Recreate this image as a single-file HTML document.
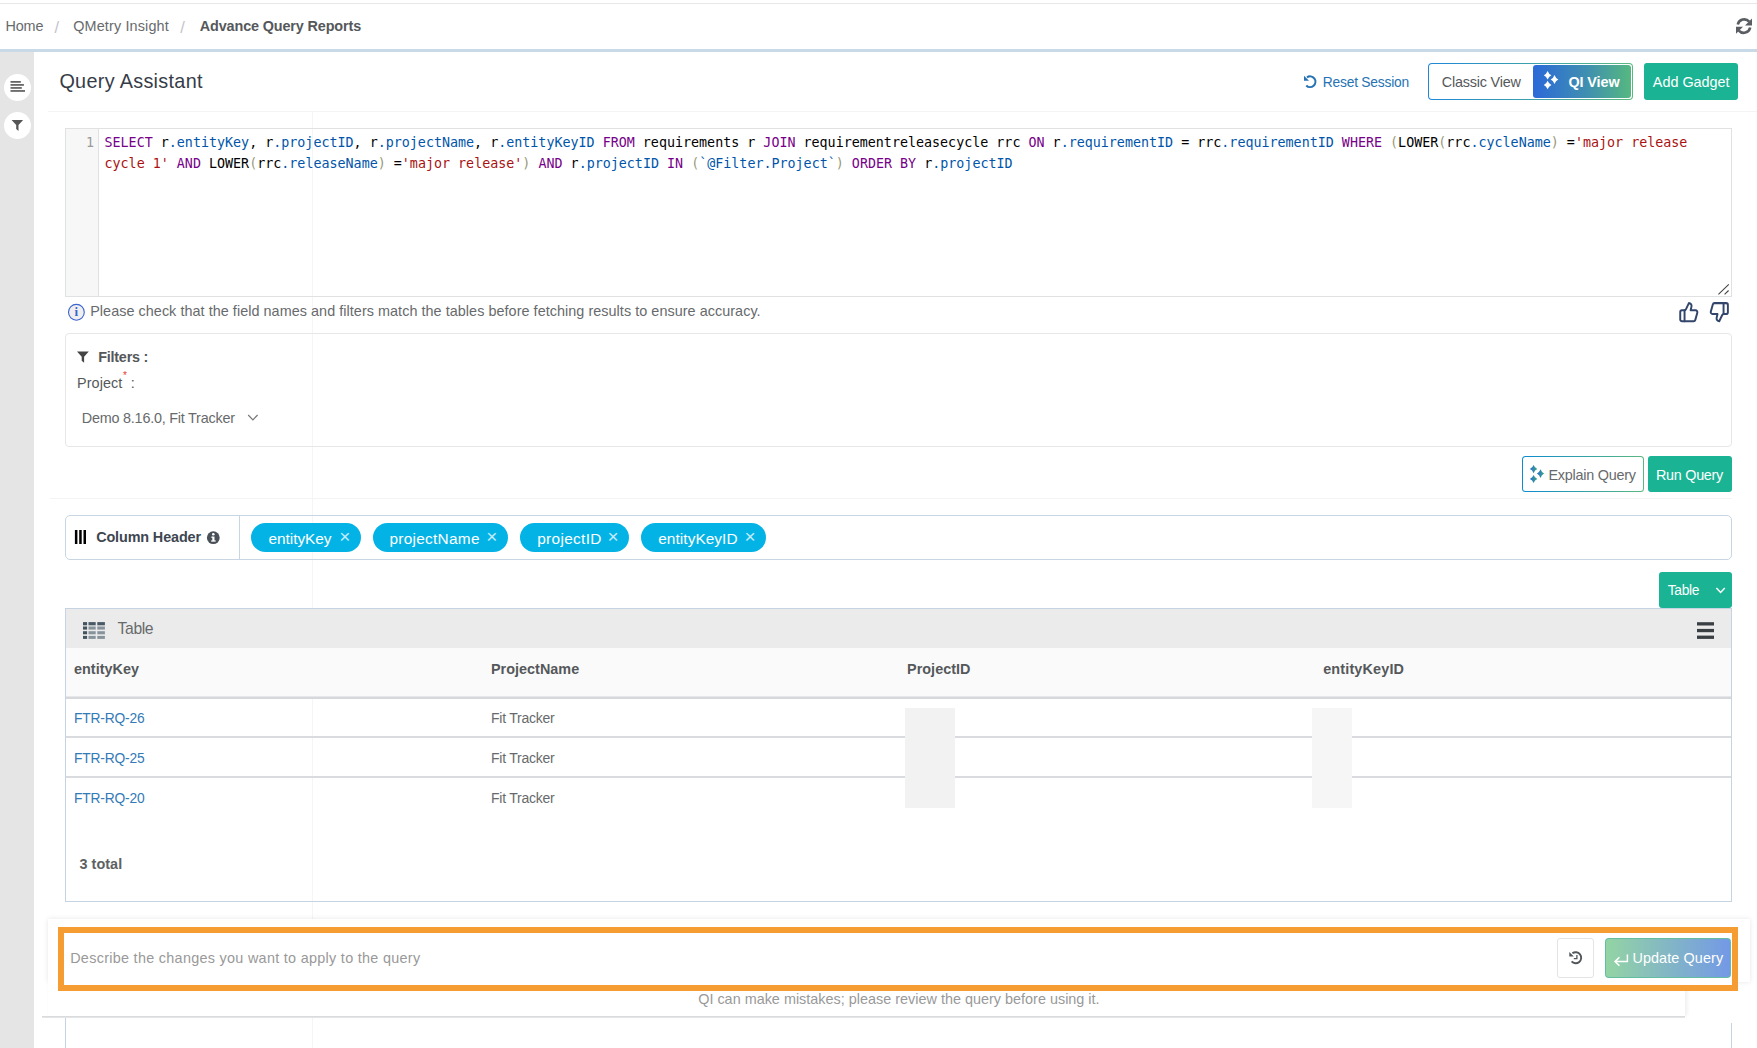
<!DOCTYPE html>
<html lang="en">
<head>
<meta charset="utf-8">
<title>Advance Query Reports</title>
<style>
*{box-sizing:border-box;margin:0;padding:0}
html,body{width:1757px;height:1048px;overflow:hidden;background:#fff}
body{position:relative;font-family:"Liberation Sans",sans-serif;font-size:14px;color:#555}
.a{position:absolute;white-space:nowrap}
.t{position:absolute;white-space:nowrap;line-height:20px;height:20px}
.b{font-weight:bold}
svg{position:absolute;overflow:visible}
/* header */
#topline{left:0;top:3px;width:1757px;height:1px;background:#e7e7e7}
#hline{left:0;top:49px;width:1757px;height:3px;background:#c9d9e6}
#side{left:0;top:52px;width:34px;height:996px;background:#e5e5e5}
#vfaint{left:312px;top:112px;width:1px;height:936px;background:#f4f5f8}
.circ{width:27px;height:27px;border-radius:50%;background:#fff;left:4px}
#sep1{left:48px;top:111px;width:1709px;height:1px;background:#f4f4f7}
#sep2{left:50px;top:498px;width:1682px;height:1px;background:#f4f4f7}
/* editor */
#editor{left:65px;top:128px;width:1667px;height:169px;border:1px solid #dfe1e3}
#gutter{left:0;top:0;width:33px;height:167px;background:#f7f7f7;border-right:1px solid #dfe1e3}
.code{font-family:"DejaVu Sans Mono","Liberation Mono",monospace;font-size:13.35px;line-height:21px;height:21px;color:#000}
.k{color:#708}.p{color:#05a}.s{color:#a11}.br{color:#997}
/* boxes */
#filters{left:65px;top:333px;width:1667px;height:114px;border:1px solid #e7e7e7;border-radius:4px}
#colhdr{left:65px;top:515px;width:1667px;height:45px;border:1px solid #c8d6e4;border-radius:5px}
#colhdr .div{left:173px;top:0;width:1px;height:43px;background:#c8d6e4}
.pill{top:523px;height:29px;border-radius:15px;background:#03b3e6;color:#fff}
.btn{border-radius:3px;background:#1ab394;color:#fff}
/* table */
#tbl{left:65px;top:608px;width:1667px;height:294px;border:1px solid #c5d3e3}
#tbl .hd{left:0;top:0;width:1665px;height:39px;background:#ebebeb}
#tbl .ch{left:0;top:39px;width:1665px;height:51px;background:#fafafa;border-bottom:2px solid #d6d8db;box-shadow:inset 0 -1px 0 #e6e7e8}
.rl{left:0;width:1665px;height:2px;background:#d9dbde}
.blur{background:#f2f2f2}
/* bottom */
#panel{left:48px;top:919px;width:1702px;height:63px;background:#fff;box-shadow:0 0 5px rgba(0,0,0,.10)}
#panel2{left:48px;top:980px;width:1637px;height:36px;background:#fff;box-shadow:2px 0 4px rgba(0,0,0,.07)}
#panel3{left:48px;top:970px;width:1630px;height:20px;background:#fff}
#pline{left:42px;top:1016px;width:1643px;height:2px;background:linear-gradient(#d3d5d7,#e9eaeb)}
.vl{width:1px;background:#c5d3e3}
#orange{left:58px;top:927px;width:1680px;height:64px;border:6px solid #f59c33;background:#fff}
</style>
</head>
<body>
<!-- header -->
<div class="a" id="topline"></div>
<div class="a" id="hline"></div>
<div class="a" id="side"></div>
<div class="a" id="vfaint"></div>
<div class="a circ" style="top:74px"></div>
<div class="a circ" style="top:112px"></div>


<div class="a" id="toggle" style="left:1428px;top:63px;width:205px;height:37px;border-radius:4px;background:linear-gradient(90deg,#1e88d8,#5cb87f)"></div>
<div class="a" style="left:1429px;top:64px;width:203px;height:35px;border-radius:3px;background:#fff"></div>
<div class="a" id="qiv" style="left:1533px;top:65px;width:98px;height:33px;border-radius:3px;background:linear-gradient(90deg,#2b69d9 0%,#3f8fb0 55%,#55b880 100%)"></div>
<div class="a btn" id="addg" style="left:1644px;top:63px;width:94px;height:37px"></div>
<div class="a" id="sep1"></div>

<!-- editor -->
<div class="a" id="editor">
  <div class="a" id="gutter"></div>
</div>


<!-- filters -->
<div class="a" id="filters"></div>

<!-- explain / run -->
<div class="a" id="expl" style="left:1522px;top:456px;width:122px;height:36px;border-radius:3.5px;background:linear-gradient(90deg,#0d8bd1,#5cb87f);"></div>
<div class="a" style="left:1523.1px;top:457.1px;width:119.8px;height:33.8px;border-radius:2.5px;background:#fff"></div>
<div class="a btn" id="run" style="left:1648px;top:456px;width:84px;height:36px"></div>
<div class="a" id="sep2"></div>

<!-- column header -->
<div class="a" id="colhdr"><div class="a div"></div></div>
<div class="a pill" style="left:251px;width:110px"></div>
<div class="a pill" style="left:373px;width:135px"></div>
<div class="a pill" style="left:520px;width:109px"></div>
<div class="a pill" style="left:641px;width:125px"></div>

<!-- table button -->
<div class="a btn" id="tbtn" style="left:1659px;top:572px;width:73px;height:36px"></div>

<!-- table -->
<div class="a" id="tbl">
  <div class="a hd"></div>
  <div class="a ch"></div>
  <div class="a rl" style="top:127px"></div>
  <div class="a rl" style="top:167px"></div>
</div>
<div class="a blur" style="left:905px;top:708px;width:50px;height:100px"></div>
<div class="a blur" style="left:1312px;top:708px;width:40px;height:100px;background:#f6f6f6"></div>

<!-- bottom panel -->
<div class="a vl" style="left:65px;top:1018px;height:30px"></div>
<div class="a vl" style="left:1731px;top:1023px;height:25px"></div>
<div class="a" id="panel"></div>
<div class="a" id="panel2"></div>
<div class="a" id="panel3"></div>
<div class="a" id="pline"></div>
<div class="a" id="orange"></div>
<div class="a" id="hist" style="left:1557px;top:938px;width:37px;height:40px;border:1px solid #e4e4e4;border-radius:3px;background:#fff"></div>
<div class="a" id="upd" style="left:1605px;top:938px;width:126px;height:40px;border-radius:4px;background:#62bda1"></div>
<div class="a" style="left:1606px;top:939px;width:124px;height:38px;border-radius:3px;background:linear-gradient(90deg,#93d4a4,#7399e6)"></div>
<svg id="icons" width="1757" height="1048" viewBox="0 0 1757 1048" style="left:0;top:0;pointer-events:none">
<defs><linearGradient id="gsp" x1="0" y1="0" x2="1" y2="0"><stop offset="0" stop-color="#2a6ad9"/><stop offset="1" stop-color="#3aaa7a"/></linearGradient></defs>
<g fill="none" stroke="#5a5e62" stroke-width="2.6"><path d="M1737.8,24.6 A6.6,6.6 0 0 1 1749.2,21.6"/><path d="M1750.2,27.6 A6.6,6.6 0 0 1 1738.8,30.6"/></g>
<path d="M1752,18.4 v7 h-7z" fill="#5a5e62"/><path d="M1736,33.8 v-7 h7z" fill="#5a5e62"/>
<rect x="10.5" y="81.10" width="10.3" height="1.6" fill="#555"/>
<rect x="10.5" y="84.12" width="13.4" height="1.6" fill="#555"/>
<rect x="10.5" y="87.14" width="11.3" height="1.6" fill="#555"/>
<rect x="10.5" y="90.16" width="14.5" height="1.6" fill="#555"/>
<path d="M11.6,119.9 h11.5 l-4.6,5.2 v5.8 l-2.3,-1.8 v-4z" fill="#555"/>
<path d="M1307.0,77.4 A5.3,5.3 0 1 1 1306.3,85.4" fill="none" stroke="#2573b4" stroke-width="2.1"/>
<path d="M1304,75.7 v5 h5z" fill="#2573b4"/>
<path fill="#fff" d="M1547.6,70.90 Q1548.74,73.91 1551.40,75.2 Q1548.74,76.49 1547.6,79.50 Q1546.46,76.49 1543.80,75.2 Q1546.46,73.91 1547.6,70.90Z M1554.5,74.90 Q1555.64,78.12 1558.30,79.5 Q1555.64,80.88 1554.5,84.10 Q1553.36,80.88 1550.70,79.5 Q1553.36,78.12 1554.5,74.90Z M1547.6,80.70 Q1548.74,83.71 1551.40,85 Q1548.74,86.29 1547.6,89.30 Q1546.46,86.29 1543.80,85 Q1546.46,83.71 1547.6,80.70Z"/>
<path d="M1718.4,294.3 L1728.8,284.4 M1724.6,294.3 L1728.6,290.5" stroke="#444" stroke-width="1.1" fill="none"/>
<circle cx="76.4" cy="312.3" r="7.9" fill="#efefef" stroke="#3b63d1" stroke-width="1.1"/>
<g transform="translate(1678.5,301.3) scale(0.865,0.905)" fill="none" stroke="#33456b" stroke-width="2.25" stroke-linecap="round" stroke-linejoin="round"><path d="M7 10v12"/><path d="M15 5.88 14 10h5.83a2 2 0 0 1 1.92 2.56l-2.33 8A2 2 0 0 1 17.5 22H4a2 2 0 0 1-2-2v-8a2 2 0 0 1 2-2h2.76a2 2 0 0 0 1.79-1.11L12 2a3.13 3.13 0 0 1 3 3.88Z"/></g>
<g transform="translate(1708.85,301.3) scale(0.865,0.905)" fill="none" stroke="#33456b" stroke-width="2.25" stroke-linecap="round" stroke-linejoin="round"><path d="M17 14V2"/><path d="M9 18.12 10 14H4.17a2 2 0 0 1-1.92-2.56l2.33-8A2 2 0 0 1 6.5 2H20a2 2 0 0 1 2 2v8a2 2 0 0 1-2 2h-2.76a2 2 0 0 0-1.79 1.11L12 22a3.13 3.13 0 0 1-3-3.88Z"/></g>
<path d="M77,351.5 h11.8 l-4.7,5.3 v5.9 l-2.4,-1.9 v-4z" fill="#444"/>
<path d="M248.2,415 l4.7,4.8 l4.7,-4.8" fill="none" stroke="#777" stroke-width="1.2"/>
<path fill="url(#gsp)" d="M1533.6,465.05 Q1534.71,467.89 1537.30,469.1 Q1534.71,470.31 1533.6,473.15 Q1532.49,470.31 1529.90,469.1 Q1532.49,467.89 1533.6,465.05Z"/>
<path fill="url(#gsp)" d="M1540.5,469.30 Q1541.58,472.31 1544.10,473.6 Q1541.58,474.89 1540.5,477.90 Q1539.42,474.89 1536.90,473.6 Q1539.42,472.31 1540.5,469.30Z"/>
<path fill="url(#gsp)" d="M1533.6,475.00 Q1534.71,477.84 1537.30,479.05 Q1534.71,480.26 1533.6,483.10 Q1532.49,480.26 1529.90,479.05 Q1532.49,477.84 1533.6,475.00Z"/>
<rect x="74.9" y="530" width="2.5" height="14" fill="#000"/>
<rect x="79.2" y="530" width="2.5" height="14" fill="#000"/>
<rect x="83.5" y="530" width="2.5" height="14" fill="#000"/>
<circle cx="213.3" cy="537.7" r="6.4" fill="#4a5058"/><rect x="212.3" y="536.6" width="2.2" height="4.6" fill="#fff"/><rect x="211.3" y="536.6" width="2" height="1.2" fill="#fff"/><rect x="211.1" y="540.4" width="4.6" height="1.2" fill="#fff"/><circle cx="213.3" cy="534.2" r="1.3" fill="#fff"/>
<path d="M1716.4,588 l4.2,4.4 l4.2,-4.4" fill="none" stroke="#fff" stroke-width="1.5"/>
<rect x="83" y="622.1" width="4.1" height="3.2" fill="#45535f"/>
<rect x="88.5" y="622.1" width="7.2" height="3.2" fill="#4a5a66"/>
<rect x="97.3" y="622.1" width="7.6" height="3.2" fill="#4a5a66"/>
<rect x="83" y="626.5" width="4.1" height="3.1" fill="#45535f"/>
<rect x="88.5" y="626.5" width="7.2" height="3.1" fill="#87939b"/>
<rect x="97.3" y="626.5" width="7.6" height="3.1" fill="#87939b"/>
<rect x="83" y="631.2" width="4.1" height="3.1" fill="#45535f"/>
<rect x="88.5" y="631.2" width="7.2" height="3.1" fill="#87939b"/>
<rect x="97.3" y="631.2" width="7.6" height="3.1" fill="#87939b"/>
<rect x="83" y="635.9" width="4.1" height="3.0" fill="#45535f"/>
<rect x="88.5" y="635.9" width="7.2" height="3.0" fill="#87939b"/>
<rect x="97.3" y="635.9" width="7.6" height="3.0" fill="#87939b"/>
<rect x="1697" y="622.2" width="17" height="3.3" fill="#3a3f44"/>
<rect x="1697" y="628.9" width="17" height="3.3" fill="#3a3f44"/>
<rect x="1697" y="635.6" width="17" height="3.3" fill="#3a3f44"/>
<path d="M1572.4,953.3 A5.5,5.5 0 1 1 1571.6,961.4" fill="none" stroke="#50565b" stroke-width="1.9"/>
<path d="M1569.3,951.9 v4.7 h4.5z" fill="#50565b"/>
<path d="M1576.9,955.0 v3.6 h-3.1" fill="none" stroke="#50565b" stroke-width="1.3"/>
<path d="M1627.4,954.4 V961.6 H1615.2 M1619.4,957.3 L1615,961.6 L1619.4,965.8" fill="none" stroke="#fff" stroke-width="1.5"/>
</svg>
<div class="t " id="bc1" style="left:5.40px;top:16.00px;font-size:14.4px;color:#676a6c;letter-spacing:-0.100px">Home</div>
<div class="t " id="bc2" style="left:54.50px;top:17.00px;font-size:16.5px;color:#c4c4cc">/</div>
<div class="t " id="bc3" style="left:73.20px;top:16.00px;font-size:14.4px;color:#676a6c;letter-spacing:0.154px">QMetry Insight</div>
<div class="t " id="bc4" style="left:180.25px;top:17.00px;font-size:16.5px;color:#c4c4cc">/</div>
<div class="t b" id="bc5" style="left:199.80px;top:16.00px;font-size:14.4px;color:#55585a;letter-spacing:-0.130px">Advance Query Reports</div>
<div class="t " id="qa" style="left:59.40px;top:71.00px;font-size:19.8px;color:#363c48;letter-spacing:0.329px">Query Assistant</div>
<div class="t " id="reset" style="left:1322.80px;top:72.50px;font-size:13.8px;color:#2573b4;letter-spacing:-0.217px">Reset Session</div>
<div class="t " id="cv" style="left:1441.80px;top:72.00px;font-size:14.4px;color:#55585a;letter-spacing:-0.200px">Classic View</div>
<div class="t b" id="qv" style="left:1568.40px;top:72.00px;font-size:14.4px;color:#fff;letter-spacing:-0.083px">QI View</div>
<div class="t " id="addgt" style="left:1652.80px;top:72.00px;font-size:14.4px;color:#fff">Add Gadget</div>
<div class="t code" id="ln" style="left:86.00px;top:132.00px;font-size:13.35px;color:#999">1</div>
<div class="t code" id="c1" style="left:104.50px;top:132.00px;font-size:13.35px;color:#000"><span class="k">SELECT</span> r<span class="p">.entityKey</span>, r<span class="p">.projectID</span>, r<span class="p">.projectName</span>, r<span class="p">.entityKeyID</span> <span class="k">FROM</span> requirements r <span class="k">JOIN</span> requirementreleasecycle rrc <span class="k">ON</span> r<span class="p">.requirementID</span> = rrc<span class="p">.requirementID</span> <span class="k">WHERE</span> <span class="br">(</span>LOWER<span class="br">(</span>rrc<span class="p">.cycleName</span><span class="br">)</span> =<span class="s">'major release</span></div>
<div class="t code" id="c2" style="left:104.50px;top:153.00px;font-size:13.35px;color:#000"><span class="s">cycle 1'</span> <span class="k">AND</span> LOWER<span class="br">(</span>rrc<span class="p">.releaseName</span><span class="br">)</span> =<span class="s">'major release'</span><span class="br">)</span> <span class="k">AND</span> r<span class="p">.projectID</span> <span class="k">IN</span> <span class="br">(</span><span class="p">`@Filter.Project`</span><span class="br">)</span> <span class="k">ORDER</span> <span class="k">BY</span> r<span class="p">.projectID</span></div>
<div class="t " id="info" style="left:90.20px;top:301.00px;font-size:14.4px;color:#676a6c;letter-spacing:0.049px">Please check that the field names and filters match the tables before fetching results to ensure accuracy.</div>
<div class="t b" id="fl" style="left:98.20px;top:347.00px;font-size:14.4px;color:#55585a;letter-spacing:-0.225px">Filters :</div>
<div class="t " id="pj" style="left:77.00px;top:373.00px;font-size:14.4px;color:#55585a;letter-spacing:0.083px">Project</div>
<div class="t " id="pjs" style="left:123.00px;top:366.00px;font-size:10px;color:#e53935">*</div>
<div class="t " id="pjc" style="left:130.80px;top:373.00px;font-size:14.4px;color:#55585a">:</div>
<div class="t " id="demo" style="left:81.80px;top:408.00px;font-size:14.4px;color:#676a6c;letter-spacing:-0.226px">Demo 8.16.0, Fit Tracker</div>
<div class="t " id="explt" style="left:1548.40px;top:465.00px;font-size:14.4px;color:#676a6c;letter-spacing:-0.233px">Explain Query</div>
<div class="t " id="runt" style="left:1656.00px;top:465.00px;font-size:14.4px;color:#fff;letter-spacing:-0.287px">Run Query</div>
<div class="t b" id="cht" style="left:96.20px;top:527.00px;font-size:14.4px;color:#3e4650;letter-spacing:-0.125px">Column Header</div>
<div class="t " id="p1" style="left:268.60px;top:528.50px;font-size:15.4px;color:#fff;letter-spacing:-0.050px">entityKey</div>
<div class="t " id="p2" style="left:389.40px;top:528.50px;font-size:15.4px;color:#fff;letter-spacing:0.280px">projectName</div>
<div class="t " id="p3" style="left:537.20px;top:528.50px;font-size:15.4px;color:#fff;letter-spacing:0.325px">projectID</div>
<div class="t " id="p4" style="left:658.20px;top:528.50px;font-size:15.4px;color:#fff;letter-spacing:0.070px">entityKeyID</div>
<div class="t xm" id="x1" style="left:339.20px;top:527.20px;font-size:19px;color:#c4ecfa">×</div>
<div class="t xm" id="x2" style="left:486.20px;top:527.20px;font-size:19px;color:#c4ecfa">×</div>
<div class="t xm" id="x3" style="left:607.40px;top:527.20px;font-size:19px;color:#c4ecfa">×</div>
<div class="t xm" id="x4" style="left:744.50px;top:527.20px;font-size:19px;color:#c4ecfa">×</div>
<div class="t " id="tbtnt" style="left:1667.80px;top:580.50px;font-size:13.8px;color:#fff;letter-spacing:-0.325px">Table</div>
<div class="t " id="tt" style="left:117.60px;top:618.50px;font-size:15.7px;color:#676a6c;letter-spacing:-0.375px">Table</div>
<div class="t b" id="h1" style="left:74.00px;top:659.00px;font-size:14.4px;color:#55585a;letter-spacing:0.025px">entityKey</div>
<div class="t b" id="h2" style="left:491.00px;top:659.00px;font-size:14.4px;color:#55585a;letter-spacing:0.020px">ProjectName</div>
<div class="t b" id="h3" style="left:907.00px;top:659.00px;font-size:14.4px;color:#55585a;letter-spacing:0.038px">ProjectID</div>
<div class="t b" id="h4" style="left:1323.20px;top:659.00px;font-size:14.4px;color:#55585a;letter-spacing:0.160px">entityKeyID</div>
<div class="t " id="r1a" style="left:74.00px;top:708.50px;font-size:13.8px;color:#337ab7;letter-spacing:-0.175px">FTR-RQ-26</div>
<div class="t " id="r2a" style="left:74.00px;top:748.50px;font-size:13.8px;color:#337ab7;letter-spacing:-0.175px">FTR-RQ-25</div>
<div class="t " id="r3a" style="left:74.00px;top:788.50px;font-size:13.8px;color:#337ab7;letter-spacing:-0.175px">FTR-RQ-20</div>
<div class="t " id="r1b" style="left:491.00px;top:708.00px;font-size:14.0px;color:#676a6c;letter-spacing:-0.250px">Fit Tracker</div>
<div class="t " id="r2b" style="left:491.00px;top:748.00px;font-size:14.0px;color:#676a6c;letter-spacing:-0.250px">Fit Tracker</div>
<div class="t " id="r3b" style="left:491.00px;top:788.00px;font-size:14.0px;color:#676a6c;letter-spacing:-0.250px">Fit Tracker</div>
<div class="t b" id="tot" style="left:79.40px;top:854.00px;font-size:14.4px;color:#5e6163;letter-spacing:0.067px">3 total</div>
<div class="t " id="ph" style="left:70.20px;top:948.00px;font-size:14.4px;color:#999;letter-spacing:0.294px">Describe the changes you want to apply to the query</div>
<div class="t " id="updt" style="left:1632.40px;top:948.00px;font-size:14.4px;color:#fff;letter-spacing:0.109px">Update Query</div>
<div class="t " id="foot" style="left:698.20px;top:989.00px;font-size:14.4px;color:#999;letter-spacing:0.011px">QI can make mistakes; please review the query before using it.</div>
<div class="t" id="infoi" style="left:73.9px;top:302.3px;font-family:'Liberation Serif',serif;font-size:13px;font-weight:bold;color:#3b63d1;width:5px;text-align:center">i</div>
</body>
</html>
